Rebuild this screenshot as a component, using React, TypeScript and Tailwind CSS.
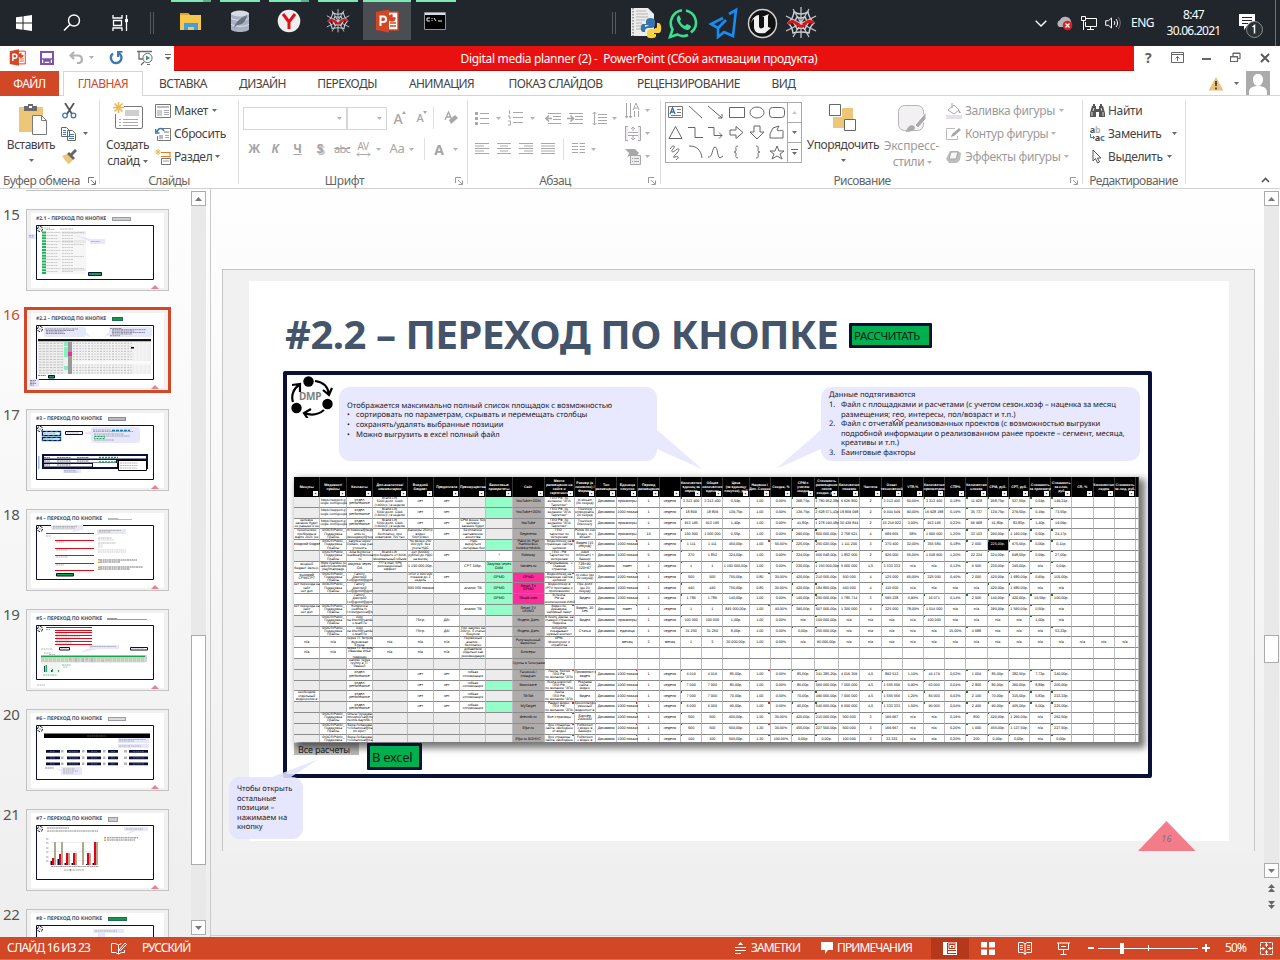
import React from "react";

type Kids = { children?: React.ReactNode };

function Svg({ w, h, children, className = "" }: { w: number; h: number; className?: string } & Kids) {
  return (
    <svg width={w} height={h} viewBox={`0 0 ${w} ${h}`} fill="none" className={`block shrink-0 ${className}`}>
      {children}
    </svg>
  );
}

function Caret({ c = "#6a6a6a", className = "" }: { c?: string; className?: string }) {
  return (
    <Svg w={5} h={3} className={className}>
      <path d="M0 0h5L2.5 3z" fill={c} />
    </Svg>
  );
}

/* ------------------------------------------------------------------ taskbar */

function Spider() {
  return (
    <Svg w={32} h={32}>
      <g stroke="#c9cdd2" strokeWidth="1.5">
        <path d="M16 0v31M1 9l30 15M1 24L31 9M8 2l16 28M24 2L8 30" strokeWidth="1.2" />
        <path d="M9 5q7 4 14 0q1 6 6 11q-4 3-5 10q-8-2-16 0q-1-7-5-10q5-4 6-11z" />
        <path d="M12 10q4 2 8 0l3 6-3 6q-4-2-8 0l-3-6z" />
      </g>
      <path d="M4 16c3-2 5-2 8 1s6 3 8 0 4-3 8-2" stroke="#e01313" strokeWidth="3" strokeLinecap="round" />
    </Svg>
  );
}

function PptIcon({ s }: { s: number }) {
  return (
    <svg width={s} height={s} viewBox="0 0 24 24" className="block shrink-0">
      <path d="M12 3h11v18H12z" fill="#fff" stroke="#d24726" strokeWidth="1.4" />
      <path d="M17 6a3 3 0 103 3h-3zM15 14h6M15 17h6" fill="#d24726" stroke="#d24726" strokeWidth="1.3" />
      <path d="M1 3l13-2.500v23L1 21z" fill="#d24726" />
      <path d="M5.500 17V7.500h2.800a2.700 2.700 0 010 5.600H5.500" fill="none" stroke="#fff" strokeWidth="2" />
    </svg>
  );
}

function TaskCell({ w, strip = "", active, children }: { w: string; strip?: string; active?: boolean } & Kids) {
  return (
    <div className={`flex h-full shrink-0 flex-col ${w}`}>
      <div className={`h-[2px] ${strip}`} />
      <div className={`flex h-[38px] items-center justify-center ${active ? "bg-[#4a4e53]" : ""}`}>{children}</div>
    </div>
  );
}

function Taskbar() {
  return (
    <header className="flex h-[46px] bg-[#20262c] text-white">
      <TaskCell w="w-[48px]">
        <Svg w={16} h={16} className="mt-1">
          <path d="M0 2.300l6.500-.9v6.200H0zM7.500 1.300L16 0v7.600H7.500zM0 8.500h6.500v6.200L0 13.800zM7.500 8.500H16V16l-8.500-1.200z" fill="#fff" />
        </Svg>
      </TaskCell>
      <TaskCell w="w-[48px]">
        <Svg w={18} h={18} className="mt-1">
          <circle cx="11" cy="6.500" r="5.500" stroke="#fff" strokeWidth="1.4" />
          <path d="M7 10.500L1 16.500" stroke="#fff" strokeWidth="1.6" />
        </Svg>
      </TaskCell>
      <TaskCell w="w-[48px]">
        <Svg w={17} h={16} className="mt-1">
          <path d="M1 0v3h9V0M1.500 5.500h8v5h-8zM1 16v-3h9v3M14.500 0v16" stroke="#fff" strokeWidth="1.300" />
          <path d="M13 4h3v3h-3z" fill="#fff" />
        </Svg>
      </TaskCell>
      <div className="flex w-[27px] items-center pl-[6px]">
        <div className="h-[22px] w-[4px] border-x border-[#545a60]" />
      </div>
      <TaskCell w="w-[40px]" strip="border-r-[8px] border-[#5cae8c] bg-[#7ce8b4]">
        <Svg w={22} h={19}>
          <path d="M0 1h8l2 2h11v15H0z" fill="#f7c64d" />
          <path d="M0 1h8l2 2H0z" fill="#dfa224" />
          <path d="M4 18v-7h14v7h-4v-3H8v3z" fill="#3f9fe0" />
        </Svg>
      </TaskCell>
      <div className="w-[9px]" />
      <TaskCell w="w-[40px]" strip="bg-[#7ce8b4]">
        <Svg w={18} h={22}>
          <path d="M0 3v16c0 4 18 4 18 0V3z" fill="#a9b1c2" />
          <ellipse cx="9" cy="3.500" rx="9" ry="3" fill="#d7dbe4" />
          <path d="M0 8c2 3 16 3 18 0M0 14c2 3 16 3 18 0" stroke="#dfe3ea" />
          <path d="M3 18C5 11 10 8 16 5c-1 6-4 10-10 10" fill="#68717f" />
        </Svg>
      </TaskCell>
      <div className="w-[9px]" />
      <TaskCell w="w-[40px]" strip="border-r-[8px] border-[#5cae8c] bg-[#7ce8b4]">
        <Svg w={24} h={24}>
          <circle cx="12" cy="12" r="11.300" fill="#efefef" />
          <path d="M6 5l6 8 6-8M12 12v8" stroke="#e0101a" strokeWidth="3" />
        </Svg>
      </TaskCell>
      <div className="w-[9px]" />
      <TaskCell w="w-[40px]" strip="bg-[#7ce8b4]">
        <svg width="24" height="24" viewBox="0 0 32 32">
          <Spider />
        </svg>
      </TaskCell>
      <div className="w-[5px]" />
      <TaskCell w="w-[48px]" strip="bg-[#7ce8b4]" active>
        <PptIcon s={24} />
      </TaskCell>
      <div className="w-[5px]" />
      <TaskCell w="w-[40px]" strip="bg-[#7ce8b4]">
        <Svg w={22} h={18} className="-ml-[2px]">
          <path d="M.5.5h21v17H.5z" fill="#000" stroke="#8d949b" />
          <path d="M1 2h20" stroke="#d8dce0" strokeWidth="2" />
          <path d="M6 6H3v3h3M8 6v1M8 8v1M10 6l2 3M14 9h4" stroke="#eee" />
        </Svg>
      </TaskCell>
      <div className="flex w-[171px] items-center justify-end pr-[11px]">
        <div className="h-[22px] w-[4px] border-x border-[#545a60]" />
      </div>
      <div className="flex h-[46px] items-center">
        <Svg w={34} h={32} className="ml-[3px]">
          <path d="M1 1h17l6 6v22H1z" fill="#ececec" />
          <path d="M3 1v28" stroke="#555" strokeDasharray="1.500 1.500" />
          <path d="M6 4h10M6 7h12M6 10h12M6 13h9M6 16h6M6 19h6M6 22h6" stroke="#b5b5b5" />
          <path d="M15 20v-2h7v-1h-9c-3 0-3 8 0 8h2c0-4 2-4 5-4 4 0 5-1 5-4v-3c0-4-9-4-9 0v3h5" fill="#3a74a8" />
          <path d="M27 16v3c0 3-2 3-5 3s-5 1-5 4v3c0 3 9 3 9 0v-2h-4v-1h7c3 0 3-9 0-10z" fill="#fcd13f" />
        </Svg>
        <Svg w={31} h={31} className="ml-[4px]">
          <path d="M14 2.200A13 13 0 004.500 21.500L2 29l7.500-2.500c3 1.800 7.500 1.800 10.500.5M18 2.500c9 2 12.500 12 8 19l-3 3" stroke="#38df8d" strokeWidth="2.600" />
          <path d="M10 8c-4 4 4 14 10 14 3-1 3-4 3-4l-4-2-2 2c-3-1-4-3-5-5l1-2-2-4z" fill="#38df8d" />
        </Svg>
        <Svg w={30} h={32} className="ml-[9px]">
          <path d="M15 11L3 17l7 4v9l6-5 9 4L28 3l-7 4" stroke="#168df4" strokeWidth="2.600" />
          <path d="M10 21l8-8" stroke="#168df4" strokeWidth="2.600" />
        </Svg>
        <Svg w={31} h={31} className="ml-[9px]">
          <circle cx="15.500" cy="15.500" r="14" fill="#111" stroke="#cfcfcf" strokeWidth="1.500" />
          <path d="M4 15c1-5 5-8 8-8v11c0 3 3 3 5 1V9l-2 0 7-3-1 2v11l3 1-6 5c-6 1-10 0-11-5v-9c-2 1-2 2-3 4z" fill="#f0f0f0" />
        </Svg>
        <div className="ml-[7px]"><Spider /></div>
      </div>
      <div className="ml-auto flex h-[46px] items-center font-['Noto_Sans',sans-serif] text-[12px]">
        <Svg w={12} h={7}><path d="M.7.700L6 6l5.300-5.300" stroke="#fff" strokeWidth="1.400" /></Svg>
        <Svg w={18} h={15} className="ml-[9px]">
          <path d="M3 11a4 4 0 011-7 6 6 0 0111 1l1 6z" fill="#b4b7ba" />
          <circle cx="11.500" cy="9.500" r="4.800" fill="#dd1f26" />
          <path d="M9.500 7.500l4 4m0-4l-4 4" stroke="#fff" strokeWidth="1.300" />
        </Svg>
        <Svg w={16} h={15} className="ml-[7px]">
          <path d="M5 2.500h10.500v8H4.500V6M9.500 11v2.500M6 13.500h7M.5.500h4v4h-4zM2.500 5v9" stroke="#fff" />
        </Svg>
        <Svg w={16} h={14} className="ml-[8px]">
          <path d="M.7 4.700h2.800L6.500 2v10L3.500 9.300H.7z" stroke="#fff" />
          <path d="M9 5c1 1 1 3 0 4M11 3c2 2 2 6 0 8" stroke="#fff" />
          <path d="M13 1c3 3 3 9 0 12" stroke="#777" />
        </Svg>
        <span className="ml-[10px] w-[24px] tracking-[-0.5px]">ENG</span>
        <div className="ml-[11px] w-[55px] whitespace-nowrap text-center leading-[16px] tracking-[-0.75px]">
          <div>8:47</div>
          <div>30.06.2021</div>
        </div>
        <Svg w={25} h={26} className="ml-[18px] mt-[7px]">
          <path d="M0 0h16v12H8l-3 4v-4H0z" fill="#fff" />
          <path d="M3 3.500h10M3 6.500h10M3 9.500h6" stroke="#20262c" />
          <circle cx="15.500" cy="15.500" r="8" fill="#2b3035" stroke="#8b8f93" />
          <path d="M13.500 13l2-1.500v8" stroke="#fff" strokeWidth="1.500" />
        </Svg>
        <div className="ml-[11px] h-[46px] w-px bg-[#6c7175]" />
        <div className="w-[4px]" />
      </div>
    </header>
  );
}

/* ---------------------------------------------------------------- title bar */

function TitleBar() {
  return (
    <div className="flex h-[25px] bg-white">
      <div className="flex w-[174px] items-center pb-[2px]">
        <div className="ml-[9px]"><PptIcon s={17} /></div>
        <Svg w={14} h={14} className="ml-[14px]">
          <path d="M1 1h12v12H1z" stroke="#8153a8" strokeWidth="2" />
          <path d="M1 8h12M4 9v5M10 9v5M4 9h6v1H4z" stroke="#8153a8" strokeWidth="1.500" />
          <path d="M3 2h8v5H3z" fill="#fff" />
        </Svg>
        <Svg w={14} h={13} className="ml-[15px]">
          <path d="M5 1L1.500 4.500 5 8M2 4.500h7c5 0 5 7 1 7.500H8" stroke="#b1b1b1" strokeWidth="2.200" />
        </Svg>
        <Caret c="#b1b1b1" className="ml-[6px]" />
        <Svg w={14} h={14} className="ml-[15px]">
          <path d="M4 2.500A5.300 5.300 0 109.500 2" stroke="#3f78b5" strokeWidth="2.400" />
          <path d="M8 0h5.500v1.800h-3.200V6H8z" fill="#3f78b5" />
        </Svg>
        <Svg w={16} h={16} className="ml-[14px]">
          <path d="M0 1.500h15M2 2v7h4M4 15l3-3" stroke="#6a6a6a" strokeWidth="1.300" />
          <circle cx="10.500" cy="8" r="4.600" stroke="#6a6a6a" fill="#fff" />
          <path d="M9 5.500v5l4-2.500z" fill="#3c9370" />
          <path d="M10 14.500h3" stroke="#6a6a6a" />
        </Svg>
        <Svg w={6} h={7} className="ml-[12px]">
          <path d="M0 .5h6" stroke="#666" /><path d="M0 3h6L3 6z" fill="#666" />
        </Svg>
      </div>
      <div className="flex w-[960px] items-center justify-center border-b border-[#b90d0d] bg-[#e91010] pr-[30px] pt-[2px] font-['Noto_Sans',sans-serif] text-[12px] tracking-[-0.33px] text-white">
        <span className="whitespace-pre">Digital media planner (2) -  PowerPoint (Сбой активации продукта)</span>
      </div>
      <div className="flex flex-1 items-center pb-[2px] text-[#5f5f5f]">
        <span className="ml-[11px] w-[9px] font-['Noto_Sans',sans-serif] text-[14px] font-bold">?</span>
        <Svg w={13} h={11} className="ml-[17px]">
          <path d="M.5.5h12v10H.5zM1 2.500h11M6.500 9V4.500M4.500 6.500l2-2 2 2" stroke="#666" />
        </Svg>
        <div className="ml-[18px] mt-[3px] h-[2px] w-[9px] bg-[#666]" />
        <Svg w={11} h={11} className="ml-[19px]">
          <path d="M.5 4.500h7v5h-7zM3 4V1.500h7v5H8M3 1h7M.5 5h7" stroke="#666" strokeWidth="1.200" />
        </Svg>
        <Svg w={10} h={10} className="ml-[19px]">
          <path d="M1 1l8 8M9 1L1 9" stroke="#5a5a5a" strokeWidth="2" />
        </Svg>
      </div>
    </div>
  );
}

function Tabs() {
  const tabs: [string, string][] = [
    ["ВСТАВКА", "w-[80px]"],
    ["ДИЗАЙН", "w-[79px]"],
    ["ПЕРЕХОДЫ", "w-[90px]"],
    ["АНИМАЦИЯ", "w-[99px]"],
    ["ПОКАЗ СЛАЙДОВ", "w-[129px]"],
    ["РЕЦЕНЗИРОВАНИЕ", "w-[137px]"],
    ["ВИД", "w-[53px]"],
  ];
  return (
    <nav className="flex h-[25px] bg-white font-['Noto_Sans',sans-serif] text-[12px] tracking-[-0.5px] text-[#444]">
      <div className="flex w-[59px] items-center justify-center bg-[#d24726] pt-px text-white">ФАЙЛ</div>
      <div className="w-[4px] border-b border-[#d5d5d5]" />
      <div className="flex w-[80px] items-center justify-center border border-b-0 border-[#d5d5d5] text-[#d24726]">ГЛАВНАЯ</div>
      {tabs.map(([t, w]) => (
        <div key={t} className={`flex items-center justify-center whitespace-nowrap border-b border-[#d5d5d5] pt-[2px] tracking-[-0.58px] ${w}`}>{t}</div>
      ))}
      <div className="flex flex-1 items-center justify-end border-b border-[#d5d5d5] pr-[10px]">
        <Svg w={16} h={15}>
          <path d="M8 1l7.500 13.500H.5z" fill="#eac27c" />
          <path d="M8 5v5M8 11.500v2" stroke="#444" strokeWidth="1.800" />
        </Svg>
        <Caret className="ml-[10px]" />
        <Svg w={24} h={24} className="ml-[7px]">
          <path d="M0 0h24v24H0z" fill="#ababab" />
          <path d="M12 3c3 0 5 2 5 5.500S15 15 12 15s-5-3-5-6.500S9 3 12 3zM3 24v-3c0-4 4-6 9-6s9 2 9 6v3z" fill="#fff" />
        </Svg>
      </div>
    </nav>
  );
}

/* ------------------------------------------------------------------- ribbon */

const G = "#a8a8a8";
const D = "#6b6b6b";

function Launcher({ c = "#777" }: { c?: string }) {
  return (
    <Svg w={8} h={8}>
      <path d="M.5 6V.5H6M3 3l4 4M7.500 3.500v4h-4" stroke={c} />
    </Svg>
  );
}

function Group({ w, label, lw, launch, children }: { w: string; label: string; lw: string; launch?: string } & Kids) {
  return (
    <section className={`flex h-full shrink-0 flex-col ${w}`}>
      <div className="flex h-[77px]">{children}</div>
      <div className="flex h-[16px] items-center whitespace-nowrap pt-px text-[#666]">
        <div className={`shrink-0 text-center ${lw}`}>{label}</div>
        {launch && <Launcher c={launch} />}
      </div>
    </section>
  );
}

function Sep() {
  return <div className="mt-[4px] h-[84px] w-px shrink-0 bg-[#dcdcdc]" />;
}

function C({ w, children, className = "" }: { w: string; className?: string } & Kids) {
  return <div className={`flex shrink-0 items-center justify-center ${w} ${className}`}>{children}</div>;
}

function Small({ icon, text, caret, off, gap = "ml-[4px]" }: { icon: React.ReactNode; text: string; caret?: boolean; off?: boolean; gap?: string }) {
  return (
    <div className={`flex h-[23px] items-center whitespace-nowrap ${off ? "text-[#9b9b9b]" : ""}`}>
      <div className="mr-[3px] flex w-[16px] justify-center">{icon}</div>
      <span>{text}</span>
      {caret && <Caret c={off ? "#b4b4b4" : "#6a6a6a"} className={gap} />}
    </div>
  );
}

function Lines({ xs, w = 14 }: { xs: [number, number][]; w?: number }) {
  return (
    <Svg w={w} h={12}>
      {xs.map(([a, b], i) => (
        <path key={i} d={`M${a} ${i * 2.5 + 0.5}H${b}`} stroke={G} />
      ))}
    </Svg>
  );
}

function ClipboardGroup() {
  return (
    <Group w="w-[99px]" label="Буфер обмена" lw="w-[83px] mr-[5px] tracking-[-0.5px]" launch="#777">
      <div className="flex w-[62px] flex-col items-center pt-[8px]">
        <Svg w={30} h={31} className="ml-[4px]">
          <path d="M1 3h24v25H1z" fill="#eec679" />
          <path d="M6 2h4V0h5v2h4v5H6z" fill="#6b6b6b" /><path d="M11 2h3v2h-3z" fill="#fff" />
          <path d="M14.500 11.500h9l5 5v14h-14z" fill="#fff" stroke="#7a7a7a" /><path d="M23.500 11.500v5h5" stroke="#7a7a7a" />
        </Svg>
        <span className="mt-[1px] leading-[18px] tracking-[-0.5px]">Вставить</span>
        <Caret className="mt-[5px]" />
      </div>
      <div className="flex flex-col pt-[3px]">
        <div className="flex h-[23px] items-center">
          <Svg w={15} h={16}>
            <path d="M3 0l7 11M12 0L5 11" stroke="#555" strokeWidth="1.800" />
            <circle cx="3" cy="12.500" r="2.300" stroke="#3f78b5" strokeWidth="1.300" /><circle cx="11.500" cy="12.500" r="2.300" stroke="#3f78b5" strokeWidth="1.300" />
          </Svg>
        </div>
        <div className="flex h-[23px] items-center">
          <Svg w={16} h={14} className="-ml-px">
            <path d="M.5.500h5l3 3v6h-8zM6.500 3.500h5l3 3v7h-8z" fill="#fff" stroke="#666" />
            <path d="M2 3.500h3M2 5.500h3M2 7.500h3M8 7.500h5M8 9.500h5M8 11.500h5" stroke="#3f78b5" />
          </Svg>
          <Caret className="ml-[6px]" />
        </div>
        <div className="flex h-[23px] items-center">
          <Svg w={15} h={15}>
            <path d="M0 7l5-2 6 6-3 3-2 1z" fill="#eec679" /><path d="M5 5l2-2 6 6-2 2z" fill="#666" /><path d="M9 6l5-5" stroke="#666" strokeWidth="3" />
          </Svg>
        </div>
      </div>
    </Group>
  );
}

function SlidesGroup() {
  const star = <path d="M5.500 0v11M0 5.500h11M1.500 1.500l8 8M9.500 1.500l-8 8" stroke="#eab955" strokeWidth="1.600" />;
  return (
    <Group w="w-[138px]" label="Слайды" lw="w-[138px] tracking-[-0.6px]">
      <div className="flex w-[55px] flex-col items-center pt-[6px]">
        <Svg w={30} h={27}>
          <rect x="2.500" y="4.500" width="27" height="22" rx="1.500" fill="#fff" stroke="#777" />
          <path d="M12 8h14v6H12z" fill="#cfcfcf" /><path d="M6 17.500h2m2 0h15M6 20.500h2m2 0h15M6 23.500h2m2 0h15" stroke="#aaa" />
          <path d="M0 0h11v12H0z" fill="#fff" />{star}
        </Svg>
        <span className="mt-[8px] leading-[16px] tracking-[-0.55px]">Создать</span>
        <span className="flex items-center leading-[16px] tracking-[-0.4px]">слайд<Caret className="ml-[3px]" /></span>
      </div>
      <div className="flex flex-col pt-[3px]">
        <Small caret text="Макет" icon={<Svg w={16} h={14}><path d="M.5.500h15v13H.5z" stroke="#777" /><path d="M2 2h12v2H2z" fill="#bbb" /><path d="M2 6h5v6H2z" fill="#ccc" /><path d="M9 6.500h5M9 8.500h5M9 10.500h5" stroke="#aaa" /></Svg>} />
        <Small text="Сбросить" icon={<Svg w={16} h={14}><path d="M6 1.500h9.500v12H2.500V9" stroke="#777" /><path d="M9 4h5v2H9zM4 8h4v4H4z" fill="#bbb" /><path d="M10 8.500h4M10 10.500h4" stroke="#aaa" /><path d="M9 4C7 0 3 1 2 5M.5 2v4h4" stroke="#3f78b5" strokeWidth="1.600" /></Svg>} />
        <Small caret gap="ml-[3px]" text="Раздел" icon={<Svg w={16} h={16}><path d="M6 3.500h9.500M6 7.500h9.500M15 3v5" stroke="#e57a28" /><path d="M6.500 9.500h9v6h-9z" stroke="#777" /><path d="M8 11h6v2H8z" fill="#ccc" /><path d="M3 0v6M0 3h6M1 1l4 4M5 1L1 5" stroke="#eab955" /></Svg>} />
      </div>
    </Group>
  );
}

function FontGroup() {
  return (
    <Group w="w-[228px]" label="Шрифт" lw="w-[211px] mr-[5px] tracking-[-0.4px]" launch="#999">
      <div className="flex flex-col pl-[4px] pt-[11px] text-[#a5a5a5]">
        <div className="flex h-[22px] items-center">
          <div className="flex h-[23px] w-[104px] items-center justify-end border border-[#d6d6d6] pr-[4px]"><Caret c="#b4b4b4" /></div>
          <div className="flex h-[23px] w-[40px] items-center justify-end border border-l border-[#d6d6d6] pr-[4px]"><Caret c="#b4b4b4" /></div>
          <C w="w-[24px]" className="pl-[2px]"><span className="text-[14px] font-medium">A</span><Svg w={4} h={3} className="-mt-3"><path d="M0 3h4L2 0z" fill={G} /></Svg></C>
          <C w="w-[22px]" className="pt-px"><span className="text-[11px] font-medium">A</span><Svg w={4} h={3} className="-mt-3"><path d="M0 0h4L2 3z" fill={G} /></Svg></C>
          <div className="h-[22px] w-px bg-[#e0e0e0]" />
          <C w="w-[33px]"><Svg w={14} h={14}><path d="M1 9L4.500 1 8 9M2.500 6h4" stroke={G} strokeWidth="1.300" /><path d="M5 9l6-5 3 3-7 6z" fill={G} /></Svg></C>
        </div>
        <div className="mt-[9px] flex h-[22px] items-center">
          <C w="w-[22px]" className="font-bold"><span>Ж</span></C>
          <C w="w-[20px]" className="font-bold italic"><span>К</span></C>
          <C w="w-[25px]" className="font-bold underline"><span>Ч</span></C>
          <C w="w-[20px]" className="text-[13px] font-bold [text-shadow:1.500px_1.500px_1px_#bbb]"><span>S</span></C>
          <C w="w-[24px]" className="text-[11px] tracking-[-0.8px] line-through"><span>abc</span></C>
          <C w="w-[18px]" className="flex-col text-[10px] leading-[11px]"><span className="tracking-[-0.5px]">AV</span><Svg w={15} h={5}><path d="M1 2.500h13M3 .5l-2 2 2 2M12 .5l2 2-2 2" stroke={G} /></Svg></C>
          <Caret c="#b4b4b4" className="ml-[4px]" />
          <C w="w-[24px]" className="ml-[4px]"><span className="text-[13px]">Aa</span></C>
          <Caret c="#b4b4b4" />
          <div className="ml-[10px] h-[22px] w-px bg-[#e0e0e0]" />
          <C w="w-[28px]" className="text-[14px] font-bold"><span>A</span></C>
          <Caret c="#b4b4b4" />
        </div>
      </div>
    </Group>
  );
}

function ParagraphGroup() {
  const full: [number, number][] = [[0, 14], [0, 14], [0, 14], [0, 14], [0, 14]];
  const pink = "#efe9f0";
  return (
    <Group w="w-[192px]" label="Абзац" lw="w-[174px] mr-[6px] tracking-[-0.6px]" launch="#999">
      <div className="flex w-[155px] flex-col pl-[7px] pt-[11px]">
        <div className="flex h-[22px] items-center">
          <Svg w={14} h={15}><path d="M5 2.500h9M5 7.500h9M5 12.500h9" stroke={G} /><path d="M0 1h3v3H0zM0 6h3v3H0zM0 11h3v3H0z" fill={G} /></Svg>
          <Caret c="#b4b4b4" className="ml-[7px]" />
          <Svg w={15} h={16} className="ml-[7px]"><path d="M5 2.500h10M5 7.500h10M5 12.500h10M1.500 0v4M0 6h2l-1 2h2M0 11h2.500v4H0" stroke={G} /></Svg>
          <Caret c="#b4b4b4" className="ml-[7px]" />
          <Svg w={16} h={11} className="ml-[10px]"><path d="M3 .5h13M8 3.500h8M8 6.500h8M3 10.500h13" stroke={G} /><path d="M7 5.500H1M4 2.500l-3 3 3 3" stroke={G} strokeWidth="1.600" /></Svg>
          <Svg w={16} h={11} className="ml-[6px]"><path d="M2 .5h14M8 3.500h8M8 6.500h8M2 10.500h14" stroke={G} /><path d="M0 5.500h6M3.500 2.500l3 3-3 3" stroke={G} strokeWidth="1.600" /></Svg>
          <Svg w={15} h={15} className="ml-[9px]"><path d="M6 3.500h9M6 6.500h9M6 9.500h9M6 12.500h9M2.500 1v13M.5 3l2-2 2 2M.5 12l2 2 2-2" stroke={G} /></Svg>
          <Caret c="#b4b4b4" className="ml-[5px]" />
        </div>
        <div className="mt-[9px] flex h-[22px] items-center">
          <Lines xs={[[0, 14], [0, 9], [0, 14], [0, 9], [0, 14]]} />
          <div className="w-[8px]" />
          <Lines xs={[[0, 14], [3, 11], [0, 14], [3, 11], [0, 14]]} />
          <div className="w-[8px]" />
          <Lines xs={[[0, 14], [5, 14], [0, 14], [5, 14], [0, 14]]} />
          <div className="w-[8px]" />
          <Lines xs={full} />
          <div className="ml-[8px] h-[22px] w-px bg-[#e0e0e0]" />
          <Svg w={13} h={12} className="ml-[8px]"><path d="M0 .5h6M0 3.500h6M0 6.500h6M0 9.500h6M7.500 .5h6M7.500 3.500h6M7.500 6.500h6M7.500 9.500h6" stroke={G} /></Svg>
          <Caret c="#b4b4b4" className="ml-[6px]" />
        </div>
      </div>
      <div className="flex flex-col pl-[2px] pt-[3px]">
        <div className="flex h-[23px] items-center"><Svg w={16} h={16}><path d="M1.500 0v14M5.500 0v14M9.500 8v6M13.500 8v6M0 13l1.500 2L3 13M4 13l1.500 2L7 13M8 7l3-7 3 7M9 5h4" stroke={G} /></Svg><Caret c="#b4b4b4" className="ml-[4px]" /></div>
        <div className="flex h-[23px] items-center"><Svg w={16} h={15}><path d="M3 .5H.5v14H3M13 .5h2.500v14H13" fill={pink} stroke={G} /><path d="M3 6.500h10M3 9.500h10M8 1v4M6 3l2-2 2 2M8 10v4M6 12l2 2 2-2" stroke={G} /></Svg><Caret c="#b4b4b4" className="ml-[4px]" /></div>
        <div className="flex h-[23px] items-center"><Svg w={16} h={16}><path d="M0 0h10l4 4-3 3H4L2 9l2-5z" fill={G} /><path d="M5.500 6.500h10v9h-10z" fill={pink} stroke={G} /><path d="M7 9.500h1m1 0h5M7 12.500h1m1 0h5" stroke={G} /></Svg><Caret c="#b4b4b4" className="ml-[4px]" /></div>
      </div>
    </Group>
  );
}

const SHAPES: React.ReactNode[] = [
  <><path d="M.5 1.500h14v11H.5z" stroke="#777" /><path d="M2 9l2.500-6L7 9M3 7h3" stroke="#2f6fb5" strokeWidth="1.300" /><path d="M9 4.500h4M9 7.500h4M3 10.500h10" stroke="#777" /></>,
  <path d="M1 1l13 12" />,
  <path d="M0 1l14 12M14 9v4h-4" />,
  <path d="M.5 2.500h15v10H.5z" />,
  <ellipse cx="8" cy="7.500" rx="7" ry="5.500" />,
  <rect x=".5" y="2.500" width="15" height="10" rx="3" />,
  <path d="M7.500 1.500l6.500 12H1z" />,
  <path d="M0 2.500h7v10h8" />,
  <path d="M0 2.500h6v8h8M11 7.500l3 3-3 3" />,
  <path d="M1 5h6V1.500l7 6-7 6V10H1z" />,
  <path d="M5 1h6v6h4l-7 7-7-7h4z" />,
  <path d="M1 9l3-6 6-2-2 4c3 2 6-1 6 1v7H1z" />,
  <path d="M2 4c3-5 6-3 3 0s0 4 3 1 4 0 1 3-5 5-2 4 5 0 1 3" />,
  <path d="M1 1c8 0 12 4 13 12" />,
  <path d="M0 12c5 1 4-10 7-10s2 10 5 11l3-2" />,
  <path d="M9 1c-3 0-2 2-2 4s-1 2-2 2c1 0 2 0 2 2s-1 4 2 4" />,
  <path d="M7 1c3 0 2 2 2 4s1 2 2 2c-1 0-2 0-2 2s1 4-2 4" />,
  <path d="M8 1l2 5h5l-4 3 2 5-5-3-5 3 2-5-4-3h5z" />,
];

function DrawingGroup() {
  return (
    <Group w="w-[421px]" label="Рисование" lw="w-[402px] mr-[7px] tracking-[-0.6px]" launch="#999">
      <div className="ml-[4px] mt-[6px] flex h-[61px] w-[137px] border border-[#ababab]">
        <div className="grid w-[121px] grid-cols-6 grid-rows-3 place-items-center">
          {SHAPES.map((s, i) => (
            <svg key={i} width="16" height="15" viewBox="0 0 16 15" fill="none" stroke="#666" className="block">{s}</svg>
          ))}
        </div>
        <div className="flex w-[14px] flex-col border-l border-[#ababab]">
          <div className="flex flex-1 items-center justify-center"><Svg w={5} h={3}><path d="M0 3h5L2.500 0z" fill="#c4c4c4" /></Svg></div>
          <div className="flex flex-1 items-center justify-center border-y border-[#ababab]"><Caret /></div>
          <div className="flex flex-1 items-center justify-center"><Svg w={7} h={7}><path d="M0 .5h7" stroke={D} /><path d="M1 3h5L3.500 6z" fill={D} /></Svg></div>
        </div>
      </div>
      <div className="flex w-[82px] flex-col items-center pt-[8px]">
        <Svg w={27} h={27} className="-ml-[2px]"><path d="M13 4h11v11H13zM4 13h11v11H4z" fill="#eec679" /><path d="M.5.500h11v11H.5zM15.500 15.500h11v11h-11z" fill="#fff" stroke="#666" /></Svg>
        <span className="mt-[5px] whitespace-nowrap leading-[18px] tracking-[-0.4px]">Упорядочить</span>
        <Caret className="mt-[5px]" />
      </div>
      <div className="flex w-[57px] flex-col items-center pt-[8px] text-[#9b9b9b]">
        <Svg w={29} h={30}><rect x=".5" y="1.500" width="25" height="25" rx="6" fill="#f3f0f4" stroke="#b5b5b5" /><path d="M8 28c1-5 5-8 8-6 3 3-2 6-8 6z" fill="#aaa" /><path d="M17 21l11-13v7l-8 9z" fill="#aaa" stroke="#fff" /></Svg>
        <span className="mt-[4px] -ml-[2px] whitespace-nowrap leading-[16px] tracking-[-0.1px]">Экспресс-</span>
        <span className="flex items-center leading-[16px]">стили<Caret c="#b4b4b4" className="ml-[3px]" /></span>
      </div>
      <div className="flex flex-col pl-[5px] pt-[3px]">
        <Small off caret text="Заливка фигуры" icon={<Svg w={16} h={16}><path d="M0 12h16v4H0z" fill="#e6dfe8" /><path d="M2 7l6-5 5 5-5 4zM6 0v5" stroke={G} fill="#fff" /><path d="M12 5l3 5h-2z" fill={G} /></Svg>} />
        <Small off caret text="Контур фигуры" gap="ml-[3px]" icon={<Svg w={16} h={14}><path d="M9 1.500H.5v11h11V9" stroke="#bbb" /><path d="M5 10l1-3 7-6 2 2-7 6z" fill={G} /></Svg>} />
        <Small off caret text="Эффекты фигуры" icon={<Svg w={16} h={14}><path d="M0 9l4-8h8l3 2-1 7-3 3H3z" fill="#bdbdbd" /><path d="M5 2h7l-2 7H3z" fill="#f7f5f8" stroke={G} /></Svg>} />
      </div>
    </Group>
  );
}

function EditingGroup() {
  return (
    <Group w="w-[102px]" label="Редактирование" lw="w-[101px] tracking-[-0.55px]">
      <div className="flex flex-col pl-[6px] pt-[3px]">
        <Small text="Найти" icon={<Svg w={15} h={14}><path d="M2 2h4v3h3V2h4l2 7v4H9V8H6v5H0V9z" fill="#555" /><path d="M3 0h2v2H3zM10 0h2v2h-2z" fill="#555" /><path d="M2 8v4M4 4l-1 3M11 4l1 3M13 8v4" stroke="#fff" strokeWidth=".8" /></Svg>} />
        <Small text="Заменить" gap="ml-[10px]" caret icon={
          <div className="flex flex-col text-[9px] font-bold leading-[8px] tracking-[-0.2px] text-[#555]">
            <div className="flex">a<span className="text-[#b4b4b4]">b</span></div>
            <div className="flex text-[#444]"><Svg w={5} h={6}><path d="M.5 0v3.500h4M3 2l1.500 1.500L3 5" stroke="#3f78b5" /></Svg>a<span className="text-[#3f78b5]">c</span></div>
          </div>} />
        <Small text="Выделить" gap="ml-[4px]" caret icon={<Svg w={10} h={15}><path d="M1 1v11l2.500-2.500L5.500 14l2-1-2-4h3.500z" fill="#fff" stroke="#555" /></Svg>} />
      </div>
    </Group>
  );
}

function Ribbon() {
  return (
    <div className="flex h-[93px] border-b border-[#d2d2d2] bg-white font-['Noto_Sans',sans-serif] text-[12px] tracking-[-0.35px] text-[#444]">
      <ClipboardGroup /><Sep />
      <SlidesGroup /><Sep />
      <FontGroup /><Sep />
      <ParagraphGroup /><Sep />
      <DrawingGroup /><Sep />
      <EditingGroup /><Sep />
      <div className="flex flex-1 items-end justify-end pb-[5px] pr-[10px]">
        <Svg w={9} h={6}><path d="M1 5l3.500-3.500L8 5" stroke="#555" strokeWidth="1.600" /></Svg>
      </div>
    </div>
  );
}

/* ---------------------------------------------------------------- scrollbar */

function ArrowBtn({ up }: { up?: boolean }) {
  return (
    <div className="flex h-[15px] w-[15px] shrink-0 items-center justify-center border border-[#ababab] bg-white">
      <Svg w={7} h={4}><path d={up ? "M0 4h7L3.500 0z" : "M0 0h7L3.500 4z"} fill="#777" /></Svg>
    </div>
  );
}

/* --------------------------------------------------------------- thumbnails */

function Rects({ f, d }: { f: string; d: string }) {
  return <path d={d.trim().split(/\s*;\s*/).map((r) => { const [x, y, w, h] = r.split(" "); return `M${x} ${y}h${w}v${h}h-${w}z`; }).join("")} fill={f} />;
}

const NAVY = "#0a1038";
const LAV = "#e7e7fb";

function ThumbText({ f = "#999", d }: { f?: string; d: string }) {
  return (
    <g stroke={f} strokeWidth=".7" strokeDasharray="2.200 .5 1.400 .4">
      {d.split(";").map((r, i) => { const [x, y, w] = r.trim().split(" "); return <path key={i} d={`M${x} ${y}h${w}`} />; })}
    </g>
  );
}

const Art15 = () => (
  <>
    <Rects f="#f6f6f6" d="16 22 44 43" />
    <Rects f="#e8e8e8" d="36 22.500 24 2.500; 36 31 24 3; 36 60 24 2" />
    <Rects f="#1fb15c" d={Array.from({ length: 15 }, (_, i) => `16 ${22.5 + i * 2.9} 4 2`).join(";")} />
    <ThumbText f="#bbb" d={Array.from({ length: 14 }, (_, i) => `20.500 ${23.5 + i * 3} ${i % 3 ? 11 : 14}; 36 ${23.5 + i * 3} ${i % 4 ? 11 : 22}`).join(";")} />
    <ThumbText f="#69bd83" d="18 19 6; 20 20.500 9" /><ThumbText d="34 20 13" />
    <Rects f={LAV} d="64 30 15 5; 2 25 8 5" /><path d="M45 25l20 5v3z" fill={LAV} />
    <ThumbText d="65 32.500 9; 3 26.500 5; 3 28 5" />
    <path d="M62.500 63.500h13v3h-13z" fill="#00a84c" stroke={NAVY} />
  </>
);

const Art16 = () => (
  <>
    <rect x="18" y="18" width="42" height="10" rx="2" fill={LAV} /><path d="M60 23v3l6 3zM83 23v3l-6 3z" fill={LAV} /><rect x="83" y="18" width="43" height="10" rx="2" fill={LAV} />
    <ThumbText f="#667" d="19 20 33; 20 21.500 28; 20 23 18; 20 24.500 19; 84 19.500 12; 86 20.700 34; 86 22 22; 86 23.500 33; 86 25 20; 84 26.700 10" />
    <Rects f="#111" d="12 30 113 2.500" /><Rects f="#efefef" d="12 32.500 113 32.500" />
    <g stroke="#8a8a8a" opacity=".5">
      <path strokeDasharray="2.500 1.100" strokeWidth=".9" d={Array.from({ length: 12 }, (_, i) => `M13 ${34.3 + i * 2.7}h25`).join("")} />
      <path strokeDasharray="2 1" strokeWidth=".9" d={Array.from({ length: 12 }, (_, i) => `M47 ${34.3 + i * 2.7}h60`).join("")} />
    </g>
    <g stroke="#fff" strokeWidth=".5">
      <path d={Array.from({ length: 19 }, (_, i) => `M${49 + i * 4} 33v32`).join("")} />
    </g>
    <Rects f="#999" d="42 33 4 32" /><Rects f="#80f2bd" d="38 33 4 4; 38 38 4 10; 38 57 4 4" /><Rects f="#ee2e93" d="42 43 4 4" />
    <Rects f="#fafafa" d="46 52 80 3.500" /><Rects f="#000" d="105 38 3 1.500" />
    <ThumbText f="#555" d="12 66.500 8" /><path d="M22.500 66.500h6v2.500h-6z" fill="#00a84c" stroke={NAVY} />
    <rect x="3" y="70" width="10" height="8" rx="1" fill={LAV} /><ThumbText f="#667" d="4 71.500 6; 4 73 5; 4 74.500 6; 4 76 4" />
  </>
);

const Art17 = () => (
  <>
    <path d="M16.500 22.500h18v4h-18zM16.500 28.500h18v3h-18z" fill="#fff" stroke="#1978b8" strokeWidth="1.500" /><path d="M16.500 22.500h18v4h-18zM16.500 28.500h18v3h-18z" stroke={NAVY} strokeDasharray="3 2" /><path d="M39.500 22.500h17v3h-17z" fill="#fff" stroke={NAVY} />
    <ThumbText d="18 24.500 12; 18 30 9; 41 24 12" />
    <rect x="65" y="18" width="49" height="16" rx="3" fill={LAV} /><path d="M65 22l-8 2 8 2z" fill={LAV} />
    <ThumbText f="#889" d="67 21 18; 67 22.500 40; 68 25 30; 68 27 36; 68 31 20" /><path d="M86 21.500h18" stroke="#1978b8" strokeWidth="1.400" strokeDasharray="3 1" /><path d="M68.500 27.500h10v2h-10z" stroke="#18a552" strokeDasharray="2 1" />
    <Rects f={NAVY} d="16 45 106 15" /><Rects f="#fff" d="18 47 102 2.500; 18 51 72 2.500; 18 55 48 2.500; 67 54 24 4" />
    <ThumbText f="#444" d="18 48.500 6; 31 48.500 14; 51 48.500 12; 18 52 6; 31 52 14; 51 52 12; 18 56 6; 31 56 14" /><path d="M73 48.500h19M73 53h19" stroke="#18a552" strokeWidth="1.600" strokeDasharray="2 1" />
    <path d="M92.500 51.500h28v10h-28z" fill="#fff" stroke="#000" /><ThumbText d="94 54 18; 94 56.500 18; 94 59 17" />
    <Rects f={LAV} d="37 60 18 4" /><ThumbText d="38 61.500 12; 38 63 13" /><Rects f="#9dbbd8" d="12 47 1.500 13" />
  </>
);

const Art18 = () => (
  <>
    <Rects f={LAV} d="25 16 32 5; 71 20 29 5" /><path d="M48 21h6l-10 3zM80 24l-18 4 12-4z" fill={LAV} /><ThumbText d="27 17.500 24; 27 19 22; 73 21.500 22; 73 23 12" />
    <path d="M20 24.500h48M29 31.500h39M29 39.500h39M29 46.500h39M29 54.500h39M29 61.500h39" stroke="#e50919" />
    <ThumbText d="20 27 5; 30 33 8; 30 41 11; 30 48 12; 30 56 8; 72 29 14; 72 34 18" />
    <ThumbText f="#bbb" d="72 31 16; 72 36 5; 72 38 5; 72 41 28; 72 43 28" />
    <ThumbText f="#333" d="74 51 37; 74 53 20; 74 58 43; 74 60 30" /><Rects f="#e5a23b" d="72 50 2 1.500; 72 52.500 2 1.500; 72 57.500 2 1.500; 72 59.500 2 1.500" />
    <path d="M30.500 64.500h17v2.500h-17z" fill="#00a84c" stroke={NAVY} />
  </>
);

const Art19 = () => (
  <>
    <path d="M20 18.500h46M29 21.500h37M29 23.500h37M29 26.500h37M29 29.500h37M29 32.500h37M29 35.500h37" stroke="#e50919" />
    <ThumbText d="20 20.500 4; 30 25 11; 30 28 24; 30 31 14; 30 34 16; 15 40 12; 18 44 7; 23 45.500 6" /><Rects f={LAV} d="63 36 30 4" /><path d="M60 40h12l-18 4z" fill={LAV} /><ThumbText d="64 37.500 26" />
    <path d="M33.500 38.500h10v2.500h-10zM104.500 38.500h17v2.500h-17z" fill="#fff" stroke={NAVY} /><ThumbText d="35 40 6; 106 40 12" />
    <Rects f="#18a552" d="15 46.500 104 2" /><Rects f="#d8dccf" d="15 48.500 104 5" /><path d="M15 50h104M15 52h104" stroke="#a9b39d" strokeWidth=".6" strokeDasharray="3 1" /><Rects f="#e9a7b4" d="43 49 2 2; 60 49 2 2; 76 51 2 2; 82 50 1 2" /><path d="M50 49v4M57 49v4M66 49v4M120 46v7" stroke="#b19bc9" />
    <Rects f="#f3f3f3" d="16 54 18 10" /><Rects f="#244b6e" d="18 57 1 6; 25 61 1 2" /><Rects f="#1fb15c" d="19.500 56 1.500 7; 26 60 1 3; 32 61 1 2" /><ThumbText f="#1fb15c" d="17 66 14; 36 56 9" /><ThumbText d="37 58 5; 11 76 8" />
  </>
);

const Art20 = () => (
  <>
    <Rects f="#000" d="18 24.500 106 4.500" /><ThumbText f="#777" d="61 27 19" />
    <Rects f={LAV} d="92 29 31 5; 92 35 31 4" /><ThumbText d="93 30.500 27; 93 32 15; 93 37 22" />
    {[41, 47.5, 53.5].map((y) => (
      <g key={y}>
        <Rects f={NAVY} d={`20 ${y} 14 2.800; 41 ${y} 13 2.800; 61 ${y} 14 2.800; 82 ${y} 10 2.800; 103 ${y} 19 2.800`} />
        <g opacity=".6"><ThumbText f="#aab" d={`24 ${y + 1.4} 5; 43 ${y + 1.4} 9; 65 ${y + 1.4} 6; 85 ${y + 1.4} 4; 107 ${y + 1.4} 11`} /></g>
        <Rects f="#b5b5b5" d={`35 ${y} 2.500 2.500; 56 ${y} 2.500 2.500; 77 ${y} 2.500 2.500; 98 ${y} 3 2.500`} />
      </g>
    ))}
    <ThumbText f="#555" d="19 59 9" /><rect x="35" y="58" width="21" height="8" rx="2" fill={LAV} /><path d="M29 59l7 2v2z" fill={LAV} /><ThumbText d="37 60 12; 37 62 15; 37 64 10" />
  </>
);

const Art21 = () => (
  <>
    <ThumbText f="#555" d="21 19 22; 21 22 51" /><Rects f={LAV} d="98 18 24 4" /><path d="M105 22h5l-12 4z" fill={LAV} /><ThumbText d="100 20 17" /><Rects f="#e5a23b" d="78 28 2 1.500; 78 30.500 2 1.500" /><ThumbText f="#444" d="81 28.800 31; 81 31 28" />
    <path d="M24 33.500h50M24 42.500h50M24 51.500h50" stroke="#e3e3e3" strokeWidth=".6" />
    <Rects f="#b0aa8c" d="28 33 2 23; 35 33 2 23; 42 44 2 12; 49 44 2 12; 56 33 2 23; 63 44 2 12; 70 33 2 23" />
    <Rects f="#e2001a" d="26 49 2 7; 33 45 2 11; 40 44 2 12; 47 44 2 12; 61 44 2 12; 68 33 2 23" />
    <Rects f={NAVY} d="24.500 52 1.500 4; 31.500 50 1.500 6; 38.500 54 1.500 2; 45.500 54 1.500 2; 60 55 1 1; 66.500 54 1.500 2" />
    <ThumbText f="#777" d="20 30 3; 20 34 3; 20 39 3; 20 43 3; 20 48 3; 20 52 3; 25 57.500 48; 38 61 20" /><Rects f="#e2001a" d="44 60.500 1 1" />
  </>
);

const Art22 = () => (
  <>
    <Rects f={LAV} d="67 20 31 4" /><path d="M72 24h7v6h-7z" fill={LAV} /><ThumbText d="69 22 22" />
  </>
);

type Thumb = { n: number; t: string; tag: string; tagCls: string; art: () => React.ReactElement };
const THUMBS: Thumb[] = [
  { n: 15, t: "#2.1 – ПЕРЕХОД ПО КНОПКЕ", tag: "w-[19px] h-[4px] border border-[#999baa] bg-[#ccc]", tagCls: "ml-[6px]", art: Art15 },
  { n: 16, t: "#2.2 – ПЕРЕХОД ПО КНОПКЕ", tag: "w-[11px] h-[4px] border border-[#246b50] bg-[#0b9a4c]", tagCls: "ml-[6px]", art: Art16 },
  { n: 17, t: "#3 – ПЕРЕХОД ПО КНОПКЕ", tag: "w-[18px] h-[4px] border border-[#888aa0] bg-[#bbb]", tagCls: "ml-[6px]", art: Art17 },
  { n: 18, t: "#4 – ПЕРЕХОД ПО КНОПКЕ", tag: "w-[24px] h-[2px] border-b border-l-[10px] border-[#bbb]", tagCls: "ml-[6px]", art: Art18 },
  { n: 19, t: "#5 – ПЕРЕХОД ПО КНОПКЕ", tag: "w-[40px] h-[2px] border-b border-l-[10px] border-[#999]", tagCls: "ml-[5px]", art: Art19 },
  { n: 20, t: "#6 – ПЕРЕХОД ПО КНОПКЕ", tag: "w-[18px] h-[4px] border border-[#999baa] bg-[#ddd]", tagCls: "ml-[6px]", art: Art20 },
  { n: 21, t: "#7 – ПЕРЕХОД ПО КНОПКЕ", tag: "w-[10px] h-[5px] border border-[#999baa] bg-[#ccc]", tagCls: "ml-[6px]", art: Art21 },
  { n: 22, t: "#8 – ПЕРЕХОД ПО КНОПКЕ", tag: "w-[19px] h-[4px] border border-[#246b50] bg-[#0b9a4c]", tagCls: "ml-[6px]", art: Art22 },
];

function ThumbRow({ n, t, tag, tagCls, art: Art }: Thumb) {
  const sel = n === 16;
  return (
    <div className="flex h-[100px] shrink-0">
      <div className={`-mt-[4px] w-[21px] pl-[3px] pt-px text-[15px] leading-[16px] tracking-[-0.3px] ${sel ? "text-[#d24726]" : "text-[#555]"}`}>{n}</div>
      <div className={`relative ml-[5px] h-[82px] w-[143px] bg-[#f1f1f1] ${sel ? "outline-[3px] -outline-offset-1 outline-[#d24726]" : "border border-[#c3c3c3]"}`}>
        <div className={`absolute bg-white ${sel ? "left-[5px] top-[4px]" : "left-[4px] top-[3px]"} h-[75px] w-[133px]`} />
        <svg width="143" height="82" viewBox="0 0 143 82" fill="none" className={`absolute ${sel ? "left-0 top-0" : "-left-px -top-px"}`}>
          <path d="M10.500 16.500h117v54h-117z" stroke={NAVY} />
          <circle cx="14" cy="20" r="2.600" stroke="#222" strokeDasharray="3 1" />
          <path d="M12.500 20h3" stroke="#777" strokeWidth=".8" />
          <Art />
          <path d="M129 76l4 4h-8z" fill="#e9828c" />
        </svg>
        <div className={`absolute flex items-center whitespace-nowrap text-[5.100px] font-bold leading-[6px] text-[#44546a] [text-rendering:geometricPrecision] ${sel ? "left-[10px] top-[7px]" : "left-[9px] top-[6px]"}`}>
          <span className="tracking-[-0.07px]">{t}</span>
          <span className={`block ${tagCls} ${tag}`} />
        </div>
      </div>
    </div>
  );
}

function SlidePanel() {
  return (
    <aside className="flex w-[211px] border-r border-[#c9c9c9] font-['Noto_Sans',sans-serif]">
      <div className="flex w-[191px] flex-col overflow-hidden">
        <div className="ml-[26px] mt-px h-[19px] w-[143px] shrink-0 border-t border-[#c3c3c3]" />
        {THUMBS.map((t) => <ThumbRow key={t.n} {...t} />)}
      </div>
      <div className="my-[2px] flex w-[15px] flex-col bg-[#e9e9e9]">
        <ArrowBtn up />
        <div className="h-[429px]" />
        <div className="h-[230px] border border-[#ababab] bg-white" />
        <div className="flex-1" />
        <ArrowBtn />
      </div>
    </aside>
  );
}

/* -------------------------------------------------------------- media plan */

const EDGES = [294.3, 320.7, 347.3, 373.3, 408, 434.3, 460.7, 486.7, 513, 545, 575, 596.3, 617.7, 638.7, 660.3, 681.3, 702.7, 723.7, 750, 771.3, 792.3, 815.7, 839.3, 860.7, 882, 903.3, 924.3, 945.7, 966.7, 988, 1009.3, 1030.7, 1051.7, 1072.7, 1094, 1115.3, 1136.7, 1139];
const GRID = EDGES.slice(1).map((e, i) => `${(e - EDGES[i]).toFixed(1)}px`).join(" ");

const HEAD = "Минусы|Медиакит/~прайсы|Контакты|Доп.аналитика/~комментарии|Входной~бюджет|Предоплата|Преимущества|Баинговые~приоритеты|Сайт|Место~размещения на~сайте и~таргетинги|Размер (в~пикселях) /~Формат|Тип~размещения|Единица~покупки|Период~размещения||Количество~единиц за~период|Общее~количество~единиц|Цена~(за единицу~покупки), руб|Наценки /~Доп. Скидки|Скидка, %|CPM с~учетом~скидки|Стоимость~размещения~после~скидки, руб|Количество~показов|Частота|Охват~технический|VTR,%|Количество~просмотров|CTR%|Количество~кликов|CPM, руб.|CPT, руб.|Стоимость~за просмотр|Стоимость~за клик,~руб|CR, %|Количество~лидов|Стоимость~за лид, руб.|".split("|");

const EMPTY_TAIL = "||||||||||||||||||||||||||";

/* "#" = hatched blank cell, "+" prefix = mint fill, "!" prefix = magenta fill, "*" prefix = black fill */
const ROWS = [
  "#|https://support.g~oogle.com/google|отдел~performance|Brand Lift:~5000 долл. США~(~400к р.) в неделю|нет|нет|#|+|YouTube+GDN|ГЕО РФ, по~желанию \"ЗПА~Таргетинг\"|In-stream~(30 секунд)|Динамика|просмотры|1|неделя|3 313 400|3 313 400|0,54р.|1.00|0.00%|268,75р.|1 780 952,38р.|6 626 800|2|3 313 400|50,00%|3 313 400|0,18%|11 928|268,75р.|537,50р.|0,54р.|149,31р.",
  "#|https://support.g~oogle.com/google|отдел~performance|Brand Lift:~5000 долл. США~(~400к р.) в неделю|нет|нет|#|+|YouTube+GDN|ГЕО РФ, по~желанию \"ЗПА~Таргетинг\"|TrueView~Unstoppable,~20 секунд|Динамика|1000 показов|1|неделя|18 809|18 809|139,75р.|1.00|0.00%|139,75р.|2 628 571,43р.|18 809 098|2|9 404 549|90,00%|16 928 188|0,19%|35 737|139,75р.|279,50р.|0,16р.|73,55р.",
  "целевое~касание будет~не раньше и не|https://support.g~oogle.com/google|отдел~performance|Brand Lift:~5000 долл. США~(~400к р.) в неделю|нет|нет|CPM менее 50р~целевое~касание будет|#|YouTube|ГЕО РФ, по~желанию \"ЗПА~Таргетинг\"|TrueView~Discovery|Динамика|просмотры|1|неделя|913 195|913 195|1,40р.|1.00|0.00%|41,80р.|1 278 190,48р.|30 439 844|2|15 219 922|3,00%|913 195|0,22%|66 968|41,80р.|83,85р.|1,40р.|19,09р.",
  "технические~проблемы в~марте 2021 (не|\\DOCS\\Public_~Поддержка~Прайсы|m.husieva@segm~ento.ru~(менеджер@segm|Brand Lift:~бесплатно, при~охватовом 700 тыс|Баннеры 250т.р.~видео~500т.р/мес|нет|Бесплатное~наставление~агентства|#|Segmento|ГЕО ,~таргетинг по~интересам|Ролик 30 сек~Видео, in-~stream|Динамика|просмотры|10|неделя|150 000|1 500 000|0,55р.|1.00|0.00%|290,00р.|800 000,00р.|2 758 621|4|689 655|58%|1 600 000|1,20%|33 103|290,00р.|1 160,00р.|0,50р.|24,17р.",
  "входной бюджет|\\DOCS\\Public_~Поддержка~Прайсы|закупка через~Deltaru, еще раз~уточнить|#|Не менее 250~000 руб. без~учета НДС|#|- НДС~вернуться~- интервью без|+|Paket XL Plan~Rambler&Co~Desktop+Mobile|Видеоплеер на~страницах сайтов,~целиком|Видео (15~секунд)|Динамика|1000 показов|1|неделя|1 111|1 111|450,00р.|1.00|50.00%|225,00р.|250 020,00р.|1 111 200|3|370 400|32,00%|355 584|0,18%|2 000|*225,00р.|675,00р.|0,00р.|0,11р.",
  "#|\\DOCS\\Public_~Поддержка~Прайсы|Julia Borisova~readsea@soloway~.ru|Brand Lift:~при бюджете от 800К,~минимальный объем|нет 300000~рублей до НДС~на месяц|нет|#|?|Soloway|ГЕО - РФ~Таргетинг по~интересам|Adult~InStream) +~баннер|Динамика|1000 показов|5|неделя|370|1 852|324,00р.|1.00|0.00%|324,00р.|600 048,00р.|1 852 000|2|926 000|55,00%|1 018 600|1,20%|22 224|324,00р.|648,00р.|0,59р.|27,00р.",
  "входной~бюджет 1млн.р.|https://yandex.ru~/adv/products/dis~play/mainpage|закупка через~ОА|??? в mail, SPb~релокационный~эффект|1 150 000,00р.|#|CPT 346р.|+Закупка через~ОАМ|Yandex.ru|«Раскрывающ...»~Главная~страница|728×90,~320×67|Динамика|пакет|1|неделя|1|1|1 150 000,00р.|1.00|0.00%|230,00р.|1 150 000,00р.|5 000 000|1,5|3 333 333|n/a|n/a|0,13%|6 500|230,00р.|345,00р.|n/a|0,04р.",
  "высокий~CPM/CPT|\\DOCS\\Public_~Поддержка~Прайсы|Галогу~Дмитрий~t.o@gpmd@gpm|#|от/от 2 000 000~показов до 2~недель|нет|#|+GPMD|!GPMD|Видеоплеер на~страницах сайтов,~целиком|In-video (до~20 секунд)|Динамика|1000 показов|1|неделя|500|500|750,00р.|0.80|30.00%|420,00р.|210 000,00р.|500 000|4|125 000|65,00%|325 000|0,40%|2 000|420,00р.|1 680,00р.|0,65р.|105,00р.",
  "нет перехода на~сайт~нет доп|\\DOCS\\Public_~Поддержка~Прайсы|Галогу~Дмитрий~t.o@gpmd@gpm|#|500 000 показов||аналог ТВ|+GPMD|!Smart TV~GPMD|Видеоплеер в~IPTV приставке и~приложениях|Пре-ролл~(до 20~секунд)|Динамика|1000 показов|1|неделя|440|440|750,00р.|0.80|30.00%|420,00р.|184 800,00р.|440 000|4|110 000|n/a|n/a|n/a|n/a|420,00р.|1 680,00р.|n/a|n/a",
  "||Галогу~Дмитрий~t.o@gpmd@gpm|#|#|#||+GPMD|!Tiksok.com|В Лента,~РФ за~исключением ИЖО|Видео|Динамика|1000 показов|1|неделя|1 786|1 786|140,00р.|1.00|0.00%|140,00р.|250 000,00р.|1 785 714|3|595 238|0,90%|16 071|0,14%|2 500|140,00р.|420,00р.|15,56р.|100,00р.",
  "нет перехода на~сайт~нет доп|\\DOCS\\Public_~Поддержка~Прайсы|Kungurova~Ludmila N.~l.n.kungurova@s|#|#|#|аналог ТВ|+|Smart TV~UNIKO|Видео по,~Динамика,~нативный пакет|Видео, 20~сек|Динамика|пакет|1|неделя|1|1|845 000,00р.|1.00|40.00%|390,00р.|507 000,00р.|1 300 000|4|325 000|78,00%|1 014 000|n/a|n/a|390,00р.|1 560,00р.|0,50р.|n/a",
  "#|\\DOCS\\Public_~Поддержка~Прайсы|Aigri~na.khem@yande~x-team.ru|#|75т.р.|ДА!|#|#|Яндекс Дзен|В ленте Дзена, на~главной странице~Яндекса|Видео|Динамика|просмотры|1|неделя|100 000|100 000|1,00р.|1.00|0.00%|n/a|100 000,00р.|n/a|n/a|n/a|n/a|100 000|n/a|n/a|n/a|n/a|1,00р.|n/a",
  "#|\\DOCS\\Public_~Поддержка~Прайсы|Aigri~na.khem@yande~x-team.ru|#|75т.р.|ДА!|При закупке на~200т.р. 3 статьи~бонусом|#|Яндекс Дзен|Алгоритм~показывает~нужный контент|Статья|Динамика|единица|1|неделя|31 250|31 250|8,00р.|1.00|0.00%|0,00р.|250 000,00р.|n/a|n/a|n/a|n/a|n/a|15,00%|4 688|n/a|n/a|n/a|53,33р.",
  "n/a|n/a|через ТГ битрикс~Жуковская~Елена|n/a|n/a|n/a|Первичный~анализ -~бесплатно||Репутационный~маркетинг|ОРМ-~Мониторинг и~отработка|||месяц|3|месяц|1|3|30 000,00р.|1.00|0.00%|n/a|90 000,00р.|n/a|n/a|n/a|n/a|n/a|n/a|n/a|n/a|n/a|n/a|n/a|n/a|n/a|n/a",
  "n/a|n/a|через ТГ битрикс~Иванова Илья~~тэквондо|n/a|n/a|n/a|добавляем~отдельно как~рекомендация||Блогеры|" + EMPTY_TAIL,
  "#|#|напрях через~группу в ТГ~Иваной|#|#|#|#|#|Группы в Телеграмм|" + EMPTY_TAIL,
  "#|#|отдел~performance|#|нет|нет|гибкая~оптимизация|#|Facebook /~Instagram|Лента, Stories~ГЕО РФ,~по желанию \"ЗПА|Промопост с~видео|Динамика|1000 показов|1|неделя|4 016|4 016|85,00р.|1.00|0.00%|85,00р.|341 385,20р.|4 016 309|4,5|892 513|1,10%|44 179|0,03%|1 004|85,00р.|382,50р.|7,73р.|340,00р.",
  "#|#|отдел~performance|#|нет|нет|гибкая~оптимизация|+|Вконтакте|Лента новостей~ГЕО РФ,~по желанию \"ЗПА|Реклама~сайта -~видео|Динамика|1000 показов|1|неделя|7 000|7 000|80,00р.|1.00|0.00%|80,00р.|560 000,00р.|7 000 000|4,5|1 555 556|0,90%|63 000|0,04%|2 800|80,00р.|360,00р.|8,89р.|200,00р.",
  "необходим~отдельный~видеоролик в|#|отдел~performance|#|нет|нет|гибкая~оптимизация|#|TikTok|Лента~ГЕО РФ,~по желанию \"ЗПА|Видео|Динамика|1000 показов|1|неделя|7 000|7 000|70,00р.|1.00|0.00%|70,00р.|490 000,00р.|7 000 000|4,5|1 555 556|1,20%|84 000|0,03%|2 100|70,00р.|315,00р.|5,83р.|233,33р.",
  "#|#|отдел~performance|#|нет|нет|гибкая~оптимизация|+|MyTarget|Раздел видео,~ГЕО РФ,~по желанию \"ЗПА|Кроссплатфо~рменный~видеопост в|Динамика|1000 показов|1|неделя|6 000|6 000|90,00р.|1.00|0.00%|90,00р.|540 000,00р.|6 000 000|4,5|1 333 333|1,50%|90 000|0,04%|2 400|90,00р.|405,00р.|6,00р.|225,00р.",
  "#|\\DOCS\\Public_~Поддержка~Прайсы|Ольга Груцкова~mtvushevva@mo~nevnik-daynnik.r|#|#|#|#|#|dnevnik.ru|Все страницы|Баннер~240x400|Динамика|1000 показов|1|неделя|500|500|400,00р.|1.50|30.00%|420,00р.|210 000,00р.|500 000|3|166 667|n/a|n/a|0,16%|800|420,00р.|1 260,00р.|n/a|262,50р.",
  "#|\\DOCS\\Public_~Поддержка~Прайсы|Вера Лобанова~<v.lobanova@ba~nn.eljur>|#|#|#|#|#|Eljur.ru|Все страницы~сайта, свободное~от видео|Fullscreen~с видео в~баннере|Динамика|1000 показов|1|неделя|500|500|500,00р.|1.30|30.00%|455,00р.|227 500,00р.|500 000|3|166 667|n/a|n/a|0,20%|1 000|455,00р.|1 137,50р.|n/a|227,50р.",
  "#|\\DOCS\\Public_~Поддержка|Вера Лобанова~<v.lobanova@ba|#|#|#|#|#|Eljur.ru БОНУС|Все страницы~сайта, свободное|Fullscreen~с видео в|Динамика|1000 показов|1|неделя|100|100|500,00р.|1.30|100.00%|0,00р.|0,00р.|100 000|3|33 333|n/a|n/a|0,20%|200|0,00р.|0,00р.|n/a|0,00р.",
].map((r) => { const a = r.replace("(~400", "(≈400").split("|"); while (a.length < 37) a.push(""); return a.slice(0, 37); });

const GREEN_COLS = new Set([15, 20, 21, 24, 26, 28, 29, 30, 31, 32]);
const RED_COLS = new Set([9, 12, 18]);

function Cell({ v, c, r }: { v: string; c: number; r: number }) {
  const f = v[0];
  const marked = f === "#" || f === "+" || f === "!" || f === "*";
  const text = marked ? v.slice(1) : v;
  const bg = f === "#" ? "bg-[#ececec]" : f === "+" ? "bg-[#95fdca]" : f === "!" ? "bg-[#fb2f9b]" : f === "*" ? "bg-black text-white" : c === 8 ? "bg-[#afabab]" : "bg-white";
  const filled = !!text && r !== 13;
  const green = filled && GREEN_COLS.has(c) && text !== "n/a";
  const red = filled && RED_COLS.has(c) && (r % 3 === 1 || r > 19) && r > 3;
  return (
    <div className={`flex items-center justify-center border-b border-r border-b-[#8b8b8b] border-r-[#bdbdbd] ${bg} ${text.length > 17 ? "text-[3.400px]" : ""}`}>
      {green && <i className="-mr-[1.500px] h-[1.500px] w-[1.500px] shrink-0 self-start bg-[#1c7a26]" />}
      <div className="min-w-0 flex-1 whitespace-pre text-center">{text.replace(/~/g, "\n")}</div>
      {red && <i className="-ml-[1.500px] h-[1.500px] w-[1.500px] shrink-0 self-start bg-[#d33]" />}
    </div>
  );
}

function MediaPlan() {
  return (
    <div className="h-[265px] w-[845px] overflow-hidden bg-white font-['Liberation_Sans',sans-serif] text-[3.700px] leading-[3.250px] text-[#000] shadow-[4px_4px_7px_2px_rgba(0,0,0,0.550)] [text-rendering:geometricPrecision]">
      <div className="grid h-[20px] bg-black text-[3.500px] font-bold leading-[4px] text-white" style={{ gridTemplateColumns: GRID }}>
        {HEAD.map((h, i) => (
          <div key={i} className="relative flex items-center justify-center border-r border-[#333]">
            <div className="whitespace-pre text-center">{h.replace(/~/g, "\n")}</div>
            {i < 36 && (
              <svg width="5" height="5" viewBox="0 0 5 5" className="absolute bottom-px right-px"><path d="M0 0h5v5H0z" fill="#f4f4f4" /><path d="M1.500 2h2L2.500 3.500z" fill="#444" /></svg>
            )}
          </div>
        ))}
      </div>
      <div className="grid auto-rows-[10.800px]" style={{ gridTemplateColumns: GRID }}>
        {ROWS.map((row, r) => row.map((v, c) => <Cell key={`${r}-${c}`} v={v} c={c} r={r} />))}
      </div>
    </div>
  );
}

/* -------------------------------------------------------------------- slide */

function DmpLogo() {
  return (
    <svg width="42" height="42" viewBox="0 0 42 42" fill="none" className="block">
      <circle cx="17.500" cy="5.500" r="5.200" fill="#000" /><circle cx="36.500" cy="28" r="5.200" fill="#000" /><circle cx="5.500" cy="32" r="5.200" fill="#000" />
      <path d="M24 5c8 1 13 6 14 13M32 14l6 5 3-7M33 34c-6 5-12 6-20 3M20 33l-7 4 4 6M2 26C0 20 2 13 8 9M1 9l8-1v8" stroke="#000" strokeWidth="2.200" />
    </svg>
  );
}

function Slide() {
  return (
    <div className="relative ml-[11px] mt-[80px] h-[582px] w-[1033px] border border-b-0 border-[#c6c6c6] bg-[#f1f1f1] font-['Noto_Sans',sans-serif] text-[#222]">
      <div className="absolute left-[26px] top-[11px] h-[560px] w-[980px] bg-white" />

      <h1 className="absolute left-[62px] top-[36px] whitespace-nowrap text-[40px] font-bold leading-[56px] tracking-[-0.450px] text-[#44546a]">#2.2 – ПЕРЕХОД ПО КНОПКЕ</h1>
      <div className="absolute left-[626px] top-[53px] flex h-[25px] w-[83px] items-center whitespace-nowrap rounded-[1px] border-[3px] border-[#0a1038] bg-[#00b050] pl-[2px] text-[11.500px] tracking-[-0.4px] text-[#0d2215]">РАССЧИТАТЬ</div>

      <div className="absolute left-[60px] top-[101px] h-[407px] w-[869px] rounded-[2px] border-4 border-[#0a1038]" />

      <div className="absolute left-[68px] top-[106px]"><DmpLogo /></div>
      <div className="absolute left-[76px] top-[120px] text-[10px] font-bold leading-[12px] tracking-[-0.3px] text-[#808080]">DMP</div>

      <div className="absolute left-[116px] top-[117px] flex h-[74px] w-[318px] flex-col justify-center rounded-[11px] bg-[#e8e8ff] pb-[6px] pl-[8px] text-[7.600px] leading-[9.600px] [text-rendering:geometricPrecision]">
        <p className="whitespace-nowrap">Отображается максимально полный список площадок с возможностью</p>
        {["сортировать по параметрам, скрывать и перемещать столбцы", "сохранять/удалять выбранные позиции", "Можно выгрузить в excel полный файл"].map((t) => (
          <p key={t} className="flex whitespace-nowrap"><span className="w-[9px]">•</span>{t}</p>
        ))}
      </div>
      <svg width="46" height="40" viewBox="0 0 46 40" className="absolute left-[434px] top-[160px]"><path d="M0 0l45 39L0 19z" fill="#e8e8ff" /></svg>

      <div className="absolute left-[598px] top-[117px] flex h-[74px] w-[319px] flex-col justify-center rounded-[11px] bg-[#e8e8ff] pl-[8px] pt-[2px] text-[7.600px] leading-[9.600px] [text-rendering:geometricPrecision]">
        <p>Данные подтягиваются</p>
        <div className="flex whitespace-nowrap"><span className="w-[12px]">1.</span><div>Файл с площадками и расчетами (с учетом сезон.коэф – наценка за месяц<br />размещения; <span className="underline decoration-red-600 decoration-wavy decoration-[0.500px] underline-offset-1">гео</span>, интересы, пол/возраст и т.п.)</div></div>
        <div className="flex whitespace-nowrap"><span className="w-[12px]">2.</span><div>Файл с отчетами реализованных проектов (с возможностью выгрузки<br />подробной информации о реализованном ранее проекте – сегмент, месяца,<br />креативы и т.п.)</div></div>
        <div className="flex"><span className="w-[12px]">3.</span>Баинговые факторы</div>
      </div>
      <svg width="46" height="40" viewBox="0 0 46 40" className="absolute left-[552px] top-[160px]"><path d="M46 0L1 39l45-20z" fill="#e8e8ff" /></svg>

      <div className="absolute left-[71px] top-[473px] flex h-[12px] w-[65px] items-center whitespace-nowrap bg-[#b9b9b9] pl-[4px] pt-[2px] text-[9px] tracking-[-0.15px]">Все расчеты</div>
      <div className="absolute left-[71px] top-[207px]"><MediaPlan /></div>

      <div className="absolute left-[144px] top-[473px] flex h-[27px] w-[55px] items-center whitespace-nowrap rounded-[1px] border-[3px] border-[#0a1038] bg-[#00b050] pl-[2px] pt-[2px] text-[13px] tracking-[-0.300px] text-[#0d2215]">В excel</div>

      <svg width="95" height="81" viewBox="0 0 95 81" className="absolute left-[6px] top-[488px]">
        <path d="M11 19h32L90 1 62 19h1a11 11 0 0111 11v40a11 11 0 01-11 11H11A11 11 0 010 70V30a11 11 0 0111-11z" fill="#e3e3ff" fillOpacity=".88" />
      </svg>
      <p className="absolute left-[14px] top-[515px] whitespace-pre text-[7.600px] leading-[9.600px] [text-rendering:geometricPrecision]">{"Чтобы открыть\nостальные\nпозиции –\nнажимаем на\nкнопку"}</p>

      <svg width="58" height="30" viewBox="0 0 58 30" className="absolute left-[915px] top-[551px]"><path d="M28.500 0L57.500 30H0z" fill="#f2737f" fillOpacity=".92" /></svg>
      <span className="absolute left-[938px] top-[563px] text-[9px] italic leading-[12px] tracking-[0.500px] text-[#76708c]">16</span>
    </div>
  );
}

/* --------------------------------------------------------------- status bar */

function StatusBar() {
  return (
    <footer className="flex h-[23px] items-center border-b border-[#8a8a8a] bg-[#d24726] font-['Noto_Sans',sans-serif] text-[12px] tracking-[-0.8px] text-white">
      <span className="w-[104px] whitespace-nowrap pl-[7px]">СЛАЙД 16 ИЗ 23</span>
      <Svg w={16} h={13} className="ml-[7px]"><path d="M.5 1.500h4l3 1.500 3-1.500M7.500 3v9M.5 1.500v9h4l3 1.500 3-1.500h3V8M8 8l6-7 1.500 1.500-6 6z" stroke="#fff" /></Svg>
      <span className="ml-[15px] w-[592px] tracking-[-0.9px]">РУССКИЙ</span>
      <Svg w={11} h={12} className="ml-px"><path d="M0 5.500h11M0 8.500h11M0 11.500h6" stroke="#fff" /><path d="M3 3h5L5.500 0z" fill="#fff" /></Svg>
      <span className="ml-[5px] w-[70px] tracking-[-0.9px]">ЗАМЕТКИ</span>
      <Svg w={12} h={12}><path d="M0 0h12v8H7l-3 4V8H0z" fill="#fff" /></Svg>
      <span className="ml-[4px] w-[94px] tracking-[-0.9px]">ПРИМЕЧАНИЯ</span>
      <div className="flex h-[21px] w-[38px] items-center justify-center bg-[#b5381b]">
        <Svg w={14} h={13}><path d="M0 0h14v13H0z" fill="#fff" /><path d="M4.500 1v11M5 8.500h8M6 2.500h6v4H6zM5 1h8M5 11.500h8" stroke="#b5381b" /><path d="M8 4h2v1.500H8z" fill="#b5381b" /></Svg>
      </div>
      <Svg w={14} h={13} className="ml-[12px]"><path d="M0 0h6v5.500H0zM8 0h6v5.500H8zM0 7.500h6v5.500H0zM8 7.500h6v5.500H8z" fill="#fff" /></Svg>
      <Svg w={14} h={13} className="ml-[23px]"><path d="M7 2L5 .5H.5v10H5L7 12l2-1.500h4.500V.5H9zM7 2v11M2 3.500h3M2 5.500h3M2 7.500h3M9 3.500h3M9 5.500h3M9 7.500h3" stroke="#fff" /></Svg>
      <Svg w={13} h={13} className="ml-[25px]"><path d="M0 1h13M1.500 1v6.500h10V1M4 4.500h5M6.500 8v4M3.500 12.500h6" stroke="#fff" /></Svg>
      <div className="ml-[18px] h-[2px] w-[6px] bg-white" />
      <Svg w={100} h={12} className="ml-[4px]"><path d="M0 6.500h100M50.500 3v6" stroke="#fff" /><path d="M22 1h4v11h-4z" fill="#fff" /></Svg>
      <Svg w={8} h={8} className="ml-[4px]"><path d="M0 4h8M4 0v8" stroke="#fff" strokeWidth="2" /></Svg>
      <span className="ml-[15px] w-[35px] tracking-[-0.900px]">50%</span>
      <Svg w={13} h={13}><path d="M.5.500h12v12H.5z" stroke="#fff" strokeDasharray="3 1" /><path d="M6.500 1v4M6.500 8v4M1 6.500h4M8 6.500h4M5 3h3M5 10h3M3 5v3M10 5v3" stroke="#fff" /></Svg>
    </footer>
  );
}

export default function App() {
  return (
    <div className="flex h-[960px] w-[1280px] flex-col overflow-hidden bg-white">
      <Taskbar />
      <TitleBar />
      <Tabs />
      <Ribbon />
      <main className="flex h-[748px] overflow-hidden bg-gradient-to-b from-[#fefefe] to-[#eeeeee]">
        <SlidePanel />
        <div className="flex h-[747px] flex-1 overflow-hidden border-b border-[#cfcfcf]">
          <div className="w-[1053px]"><Slide /></div>
          <div className="flex w-[16px] flex-col pt-[2px]">
            <ArrowBtn up />
            <div className="h-[657px] w-[15px] shrink-0 bg-[#e9e9e9] pt-[429px]">
              <div className="h-[28px] w-[15px] border border-[#ababab] bg-white" />
            </div>
            <ArrowBtn />
            <div className="flex h-[50px] w-[15px] flex-col items-center gap-[9px] pt-[6px]">
              <Svg w={7} h={8}><path d="M0 4h7L3.500 0zM0 8h7L3.500 4z" fill="#666" /></Svg>
              <Svg w={7} h={8}><path d="M0 0h7L3.500 4zM0 4h7L3.500 8z" fill="#666" /></Svg>
            </div>
          </div>
        </div>
      </main>
      <StatusBar />
    </div>
  );
}
